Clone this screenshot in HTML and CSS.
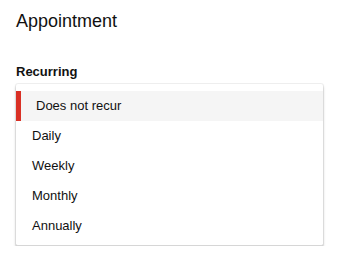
FILE: index.html
```html
<!DOCTYPE html>
<html lang="en">
<head>
<meta charset="utf-8">
<title>Appointment</title>
<link rel="stylesheet" href="styles.css">
</head>
<body>
<div class="page">
  <h1 class="title">Appointment</h1>
  <div class="label">Recurring</div>
  <ul class="menu">
    <li class="item selected">Does not recur</li>
    <li class="item">Daily</li>
    <li class="item">Weekly</li>
    <li class="item">Monthly</li>
    <li class="item">Annually</li>
  </ul>
</div>
</body>
</html>
```
FILE: styles.css
```css
html, body {
  margin: 0;
  padding: 0;
  background: #ffffff;
}
body {
  font-family: "Liberation Sans", Arial, sans-serif;
  color: #202020;
}
.page {
  padding: 10px 16px 0 16px;
}
.title {
  margin: 0;
  font-size: 18px;
  font-weight: normal;
  line-height: 22px;
  color: #111111;
}
.label {
  margin-top: 32px;
  font-size: 13px;
  font-weight: bold;
  line-height: 16px;
  color: #111111;
}
.menu {
  list-style: none;
  margin: 4px 0 0 0;
  padding: 7px 0 4px 0;
  width: 307px;
  background: #ffffff;
  border-radius: 2px;
  border-bottom: 1px solid #d6d6d6;
  box-shadow: 0 0 0 1px rgba(0, 0, 0, 0.06), 0 2px 3px 0 rgba(0, 0, 0, 0.25);
}
.item {
  font-size: 13px;
  line-height: 30px;
  height: 30px;
  padding-left: 16px;
  color: #111111;
}
.item.selected {
  background: #f5f5f5;
  border-left: 5px solid #d93025;
  padding-left: 15px;
}
```
